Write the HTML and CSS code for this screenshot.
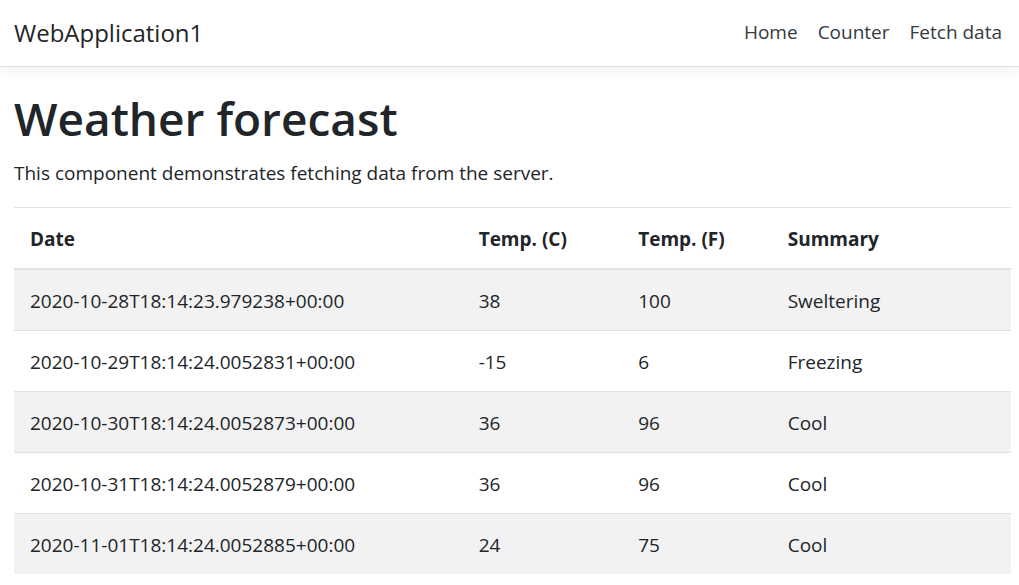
FILE: index.html
```html
<!DOCTYPE html>
<html lang="en">
<head>
    <meta charset="UTF-8">
    <meta name="viewport" content="width=device-width, initial-scale=1.0">
    <title>WebApplication1</title>
    <link rel="stylesheet" href="styles.css">
</head>
<body>
    <header class="navbar">
        <a class="brand" href="#">WebApplication1</a>
        <nav class="nav-links">
            <a href="#">Home</a>
            <a href="#">Counter</a>
            <a href="#">Fetch data</a>
        </nav>
    </header>
    <main class="content">
        <h1>Weather forecast</h1>
        <p>This component demonstrates fetching data from the server.</p>
        <table class="table">
            <thead>
                <tr>
                    <th class="date">Date</th>
                    <th class="temp-c">Temp. (C)</th>
                    <th class="temp-f">Temp. (F)</th>
                    <th class="summary">Summary</th>
                </tr>
            </thead>
            <tbody>
                <tr>
                    <td>2020-10-28T18:14:23.979238+00:00</td>
                    <td>38</td>
                    <td>100</td>
                    <td>Sweltering</td>
                </tr>
                <tr>
                    <td>2020-10-29T18:14:24.0052831+00:00</td>
                    <td>-15</td>
                    <td>6</td>
                    <td>Freezing</td>
                </tr>
                <tr>
                    <td>2020-10-30T18:14:24.0052873+00:00</td>
                    <td>36</td>
                    <td>96</td>
                    <td>Cool</td>
                </tr>
                <tr>
                    <td>2020-10-31T18:14:24.0052879+00:00</td>
                    <td>36</td>
                    <td>96</td>
                    <td>Cool</td>
                </tr>
                <tr>
                    <td>2020-11-01T18:14:24.0052885+00:00</td>
                    <td>24</td>
                    <td>75</td>
                    <td>Cool</td>
                </tr>
            </tbody>
        </table>
    </main>
</body>
</html>
```
FILE: styles.css
```css
* {
    box-sizing: border-box;
}
body {
    margin: 0;
    font-family: "Segoe UI", "Open Sans", "Noto Sans", sans-serif;
    font-size: 19px;
    line-height: 28px;
    color: #212529;
    background-color: #fff;
}
.navbar {
    display: flex;
    justify-content: space-between;
    align-items: center;
    padding: 14px 17px 14px 14px;
    border-bottom: 1px solid #dee2e6;
    box-shadow: 0 4px 12px rgba(0, 0, 0, 0.05);
}
.navbar a {
    color: #343a40;
    text-decoration: none;
}
.navbar .brand {
    font-size: 24px;
    line-height: 38px;
    color: #212529;
}
.nav-links {
    display: flex;
    gap: 20px;
    padding-bottom: 2px;
}
.content {
    padding: 22px 8px 0 14px;
}
.content h1 {
    margin: 0 0 12px;
    font-size: 46px;
    font-weight: 600;
    line-height: 58px;
}
.content p {
    margin: 0 0 20px;
}
.table {
    width: 100%;
    table-layout: fixed;
    border-collapse: collapse;
}
.table th,
.table td {
    padding: 17px 16px 15px;
    text-align: left;
    border-top: 1px solid #dee2e6;
}
.table thead th {
    font-weight: 700;
    border-bottom: 2px solid #dee2e6;
}
.table tbody tr:nth-of-type(odd) {
    background-color: #f2f2f2;
}
.table .date {
    width: 45%;
}
.table .temp-c {
    width: 16%;
}
.table .temp-f {
    width: 15%;
}
.table .summary {
    width: 24%;
}
```
